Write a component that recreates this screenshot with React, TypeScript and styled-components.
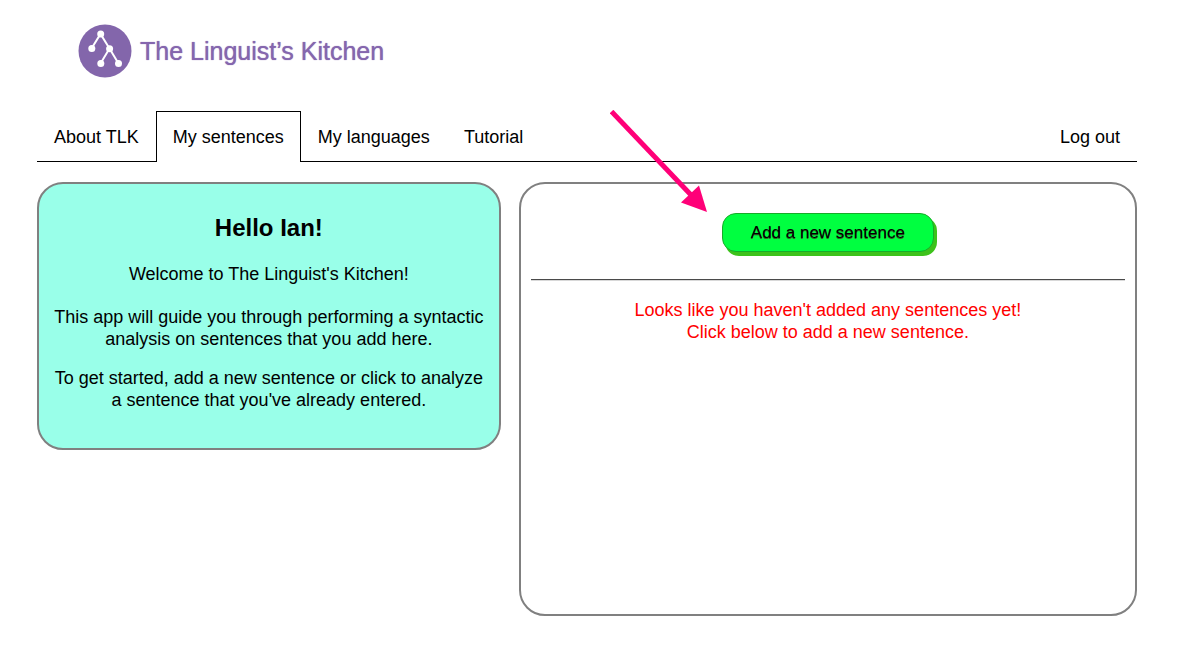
import React from "react";
import styled, { createGlobalStyle } from "styled-components";

const GlobalStyle = createGlobalStyle`
  *, *::before, *::after { box-sizing: border-box; }
  body {
    margin: 0;
    background: #fff;
    color: #000;
    font: 18px/22px "Liberation Sans", Arial, Helvetica, sans-serif;
  }
`;

const Page = styled.div`
  padding: 24px 40px 40px 37px;
`;

const Brand = styled.a`
  display: inline-flex;
  align-items: center;
  gap: 8px;
  margin-left: 41px;
  color: #8566ae;
  text-decoration: none;
  font-size: 25px;
  line-height: 54px;
  vertical-align: top;
  text-shadow: 0 0 1px #8566ae;
`;

const LogoMark = styled.svg`
  display: block;
  width: 54px;
  height: 54px;
`;

const Nav = styled.nav`
  display: flex;
  margin-top: 33px;
  box-shadow: inset 0 -1px #000;
`;

const Tab = styled.a<{ $active?: boolean; $end?: boolean }>`
  padding: 14px 16px;
  border: 1px solid transparent;
  border-bottom: 0;
  margin-left: ${(p) => (p.$end ? "auto" : "0")};
  color: #000;
  text-decoration: none;
  ${(p) => p.$active && "border-color: #000; background: #fff;"}
`;

const Columns = styled.main`
  display: grid;
  grid-template-columns: 3fr 4fr;
  align-items: start;
  gap: 18px;
  margin-top: 20px;
`;

const Panel = styled.section<{ $tinted?: boolean }>`
  min-height: ${(p) => (p.$tinted ? "0" : "434px")};
  padding: ${(p) => (p.$tinted ? "30px 12px 37px" : "29px 10px")};
  border: 2px solid #808080;
  border-radius: 26px;
  background: ${(p) => (p.$tinted ? "#99ffe9" : "#fff")};
  text-align: center;
`;

const Greeting = styled.h2`
  margin: 0 0 21px;
  font-size: 24px;
  line-height: 28px;
`;

const Welcome = styled.p`
  margin: 0 0 21px;
`;

const Guide = styled.p`
  margin: 0 0 17px;
  &:last-child { margin-bottom: 0; }
`;

const AddButton = styled.button`
  display: block;
  margin: 0 auto;
  padding: 9px 28px 8px;
  border: 1px solid #18ab29;
  border-radius: 14px;
  background: #00ff40;
  box-shadow: 3px 4px 0 #3dc21b;
  color: #000;
  font-family: inherit;
  font-size: 17px;
  line-height: 20px;
  text-shadow: 0 1px 0 #2f6627;
  cursor: pointer;
`;

const Divider = styled.hr`
  margin: 27px 0 18px;
  border: 0;
  border-top: 1px solid #4a4a4a;
  border-bottom: 1px solid #d8d8d8;
`;

const Notice = styled.p`
  margin: 0;
  color: #f00;
`;

const Arrow = styled.svg`
  position: absolute;
  top: -74px;
  left: 89px;
  width: 100px;
  height: 104px;
  pointer-events: none;
`;

const SentencePanel = styled(Panel)`
  position: relative;
`;

export default function App() {
  return (
    <Page>
      <GlobalStyle />
      <header>
        <Brand href="#">
          <LogoMark viewBox="0 0 54 54" aria-hidden="true">
            <circle cx="27" cy="27" r="26.5" fill="#8366ab" />
            <path d="M13.5 24.5 22.5 10 31.5 24.5 40.5 39.5M31.5 24.5 22.5 39.5" fill="none" stroke="#fff" strokeWidth="2" />
            <g fill="#fff">
              <circle cx="22.7" cy="10" r="3.5" />
              <circle cx="13.8" cy="24.6" r="3.5" />
              <circle cx="31.6" cy="24.8" r="3.5" />
              <circle cx="22.8" cy="39.5" r="3.5" />
              <circle cx="40.5" cy="39.5" r="3.5" />
            </g>
          </LogoMark>
          <span>The Linguist’s Kitchen</span>
        </Brand>
        <Nav>
          <Tab href="#about">About TLK</Tab>
          <Tab href="#sentences" $active aria-current="page">My sentences</Tab>
          <Tab href="#languages">My languages</Tab>
          <Tab href="#tutorial">Tutorial</Tab>
          <Tab href="#logout" $end>Log out</Tab>
        </Nav>
      </header>
      <Columns>
        <Panel $tinted>
          <Greeting>Hello Ian!</Greeting>
          <Welcome>Welcome to The Linguist's Kitchen!</Welcome>
          <Guide>This app will guide you through performing a syntactic analysis on sentences that you add here.</Guide>
          <Guide>To get started, add a new sentence or click to analyze a sentence that you've already entered.</Guide>
        </Panel>
        <SentencePanel>
          <AddButton type="button">Add a new sentence</AddButton>
          <Divider />
          <Notice>
            Looks like you haven't added any sentences yet!
            <br />
            Click below to add a new sentence.
          </Notice>
          <Arrow viewBox="0 0 100 104" aria-hidden="true">
            <path d="M1.5 1.5 82 86" stroke="#ff0078" strokeWidth="5" />
            <path d="M97 102 71 92.500 89 75.500Z" fill="#ff0078" />
          </Arrow>
        </SentencePanel>
      </Columns>
    </Page>
  );
}
